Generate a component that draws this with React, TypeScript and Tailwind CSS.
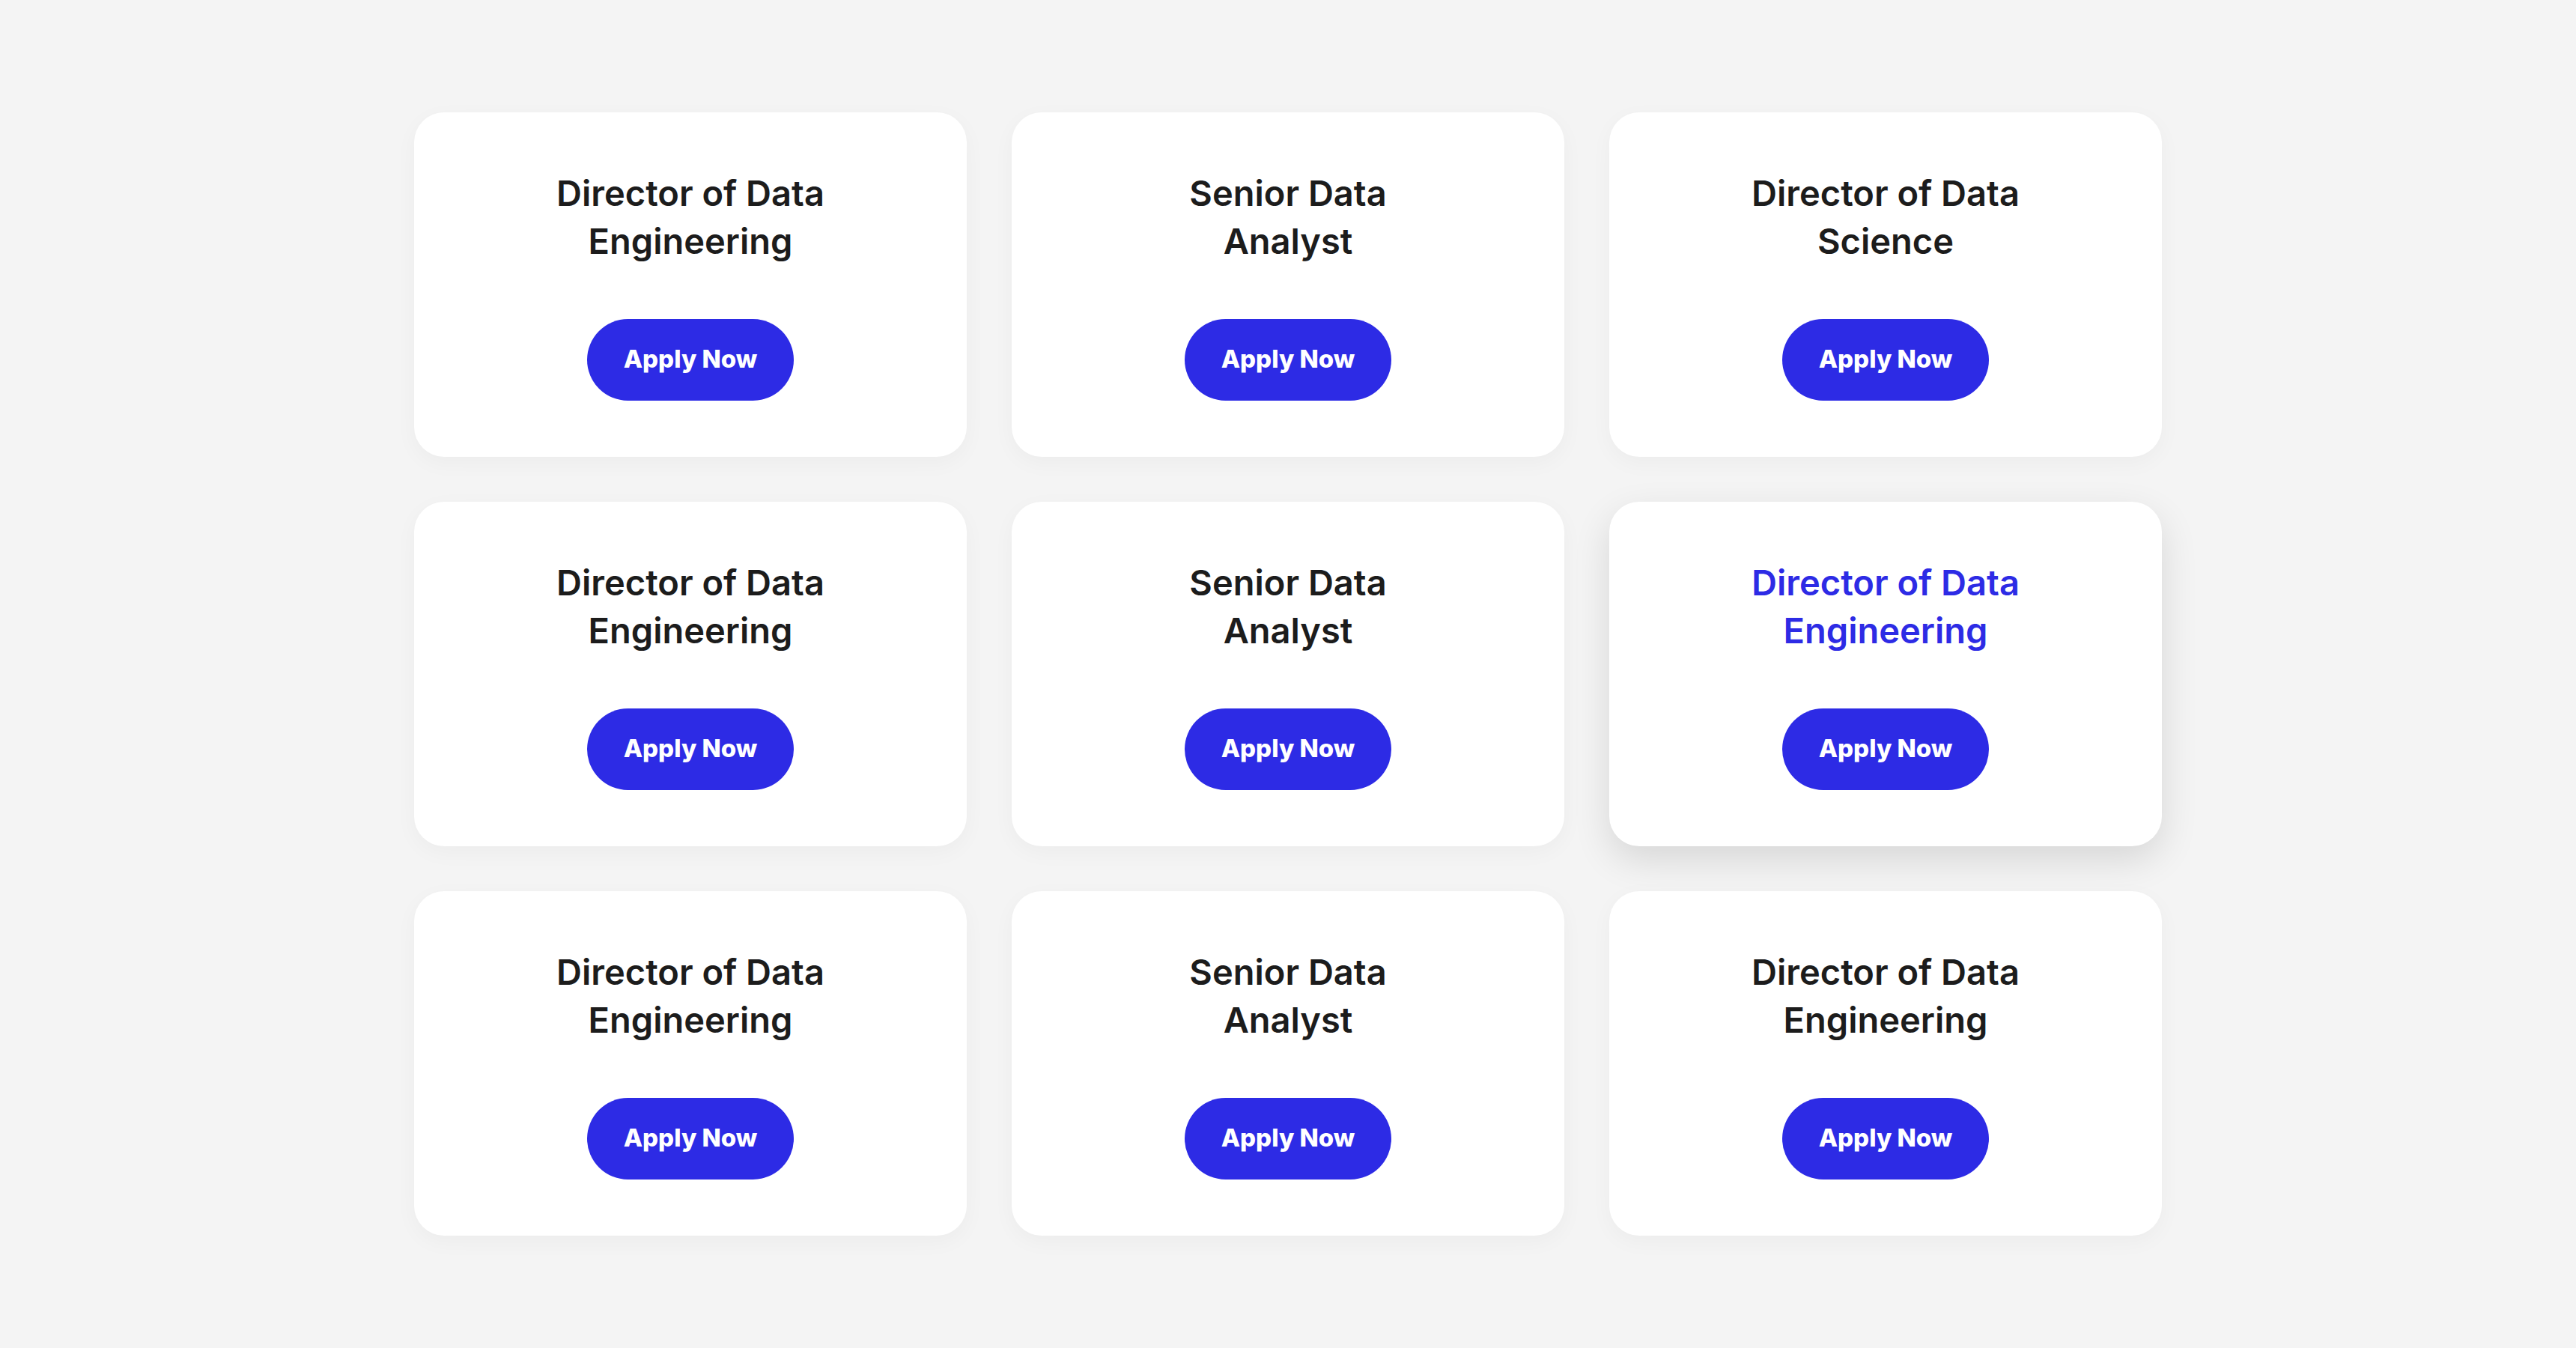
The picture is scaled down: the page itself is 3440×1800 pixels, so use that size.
import React from 'react'

/* ─── Job Data ─── */

const JOBS = [
  { id: 1, title: 'Director of Data Engineering' },
  { id: 2, title: 'Senior Data Analyst' },
  { id: 3, title: 'Director of Data Science' },
  { id: 4, title: 'Director of Data Engineering' },
  { id: 5, title: 'Senior Data Analyst' },
  { id: 6, title: 'Director of Data Engineering', active: true },
  { id: 7, title: 'Director of Data Engineering' },
  { id: 8, title: 'Senior Data Analyst' },
  { id: 9, title: 'Director of Data Engineering' },
]

/* ─── Card ─── */

function JobCard({ title, active }: { title: string; active?: boolean }) {
  return (
    <div
      className={
        active
          ? 'flex h-[460px] flex-col items-center justify-center gap-[72px] rounded-[40px] bg-white shadow-[0_18px_50px_rgba(0,0,0,0.12)]'
          : 'flex h-[460px] flex-col items-center justify-center gap-[72px] rounded-[40px] bg-white shadow-[0_8px_30px_rgba(0,0,0,0.035)]'
      }
    >
      <h3
        className={
          active
            ? 'max-w-[420px] text-center text-[47px] font-semibold leading-[64px] text-[#2d2be5]'
            : 'max-w-[420px] text-center text-[47px] font-semibold leading-[64px] text-[#1c1c1c]'
        }
      >
        {title}
      </h3>
      <button className="flex h-[109px] w-[276px] items-center justify-center rounded-full bg-[#2d2be5] text-[33px] font-extrabold text-white">
        Apply Now
      </button>
    </div>
  )
}

/* ─── Main Component ─── */

export default function App() {
  return (
    <div
      className="flex min-h-screen w-full items-center justify-center bg-[#f4f4f4]"
      style={{ fontFamily: 'Inter, "Noto Sans", sans-serif' }}
    >
      <div className="grid w-[2334px] grid-cols-3 gap-[60px]">
        {JOBS.map((job) => (
          <JobCard key={job.id} title={job.title} active={job.active} />
        ))}
      </div>
    </div>
  )
}
